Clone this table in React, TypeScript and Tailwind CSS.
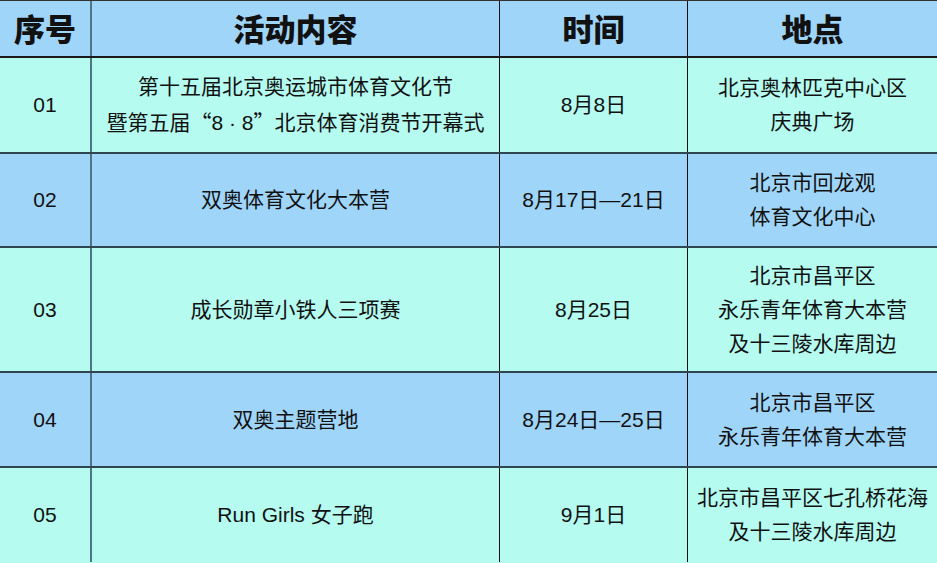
import React from 'react';

interface Row {
  no: string;
  event: React.ReactNode[];
  time: string;
  place: string[];
  height: string;
  bg: string;
}

const cjk = { fontFamily: '"Noto Sans CJK SC", sans-serif' };

const rows: Row[] = [
  {
    no: '01',
    event: [
      '第十五届北京奥运城市体育文化节',
      <>
        暨第五届<span style={cjk}>“</span>8 · 8<span style={cjk}>”</span>北京体育消费节开幕式
      </>,
    ],
    time: '8月8日',
    place: ['北京奥林匹克中心区', '庆典广场'],
    height: 'h-[96px]',
    bg: 'bg-[#b5fbf0]',
  },
  {
    no: '02',
    event: ['双奥体育文化大本营'],
    time: '8月17日—21日',
    place: ['北京市回龙观', '体育文化中心'],
    height: 'h-[94px]',
    bg: 'bg-[#a0d5fa]',
  },
  {
    no: '03',
    event: ['成长勋章小铁人三项赛'],
    time: '8月25日',
    place: ['北京市昌平区', '永乐青年体育大本营', '及十三陵水库周边'],
    height: 'h-[125px]',
    bg: 'bg-[#b5fbf0]',
  },
  {
    no: '04',
    event: ['双奥主题营地'],
    time: '8月24日—25日',
    place: ['北京市昌平区', '永乐青年体育大本营'],
    height: 'h-[95px]',
    bg: 'bg-[#a0d5fa]',
  },
  {
    no: '05',
    event: ['Run Girls 女子跑'],
    time: '9月1日',
    place: ['北京市昌平区七孔桥花海', '及十三陵水库周边'],
    height: 'h-[94px]',
    bg: 'bg-[#b5fbf0]',
  },
];

const font = { fontFamily: '"Liberation Sans", "Noto Sans CJK SC", sans-serif' };

const Lines: React.FC<{ lines: React.ReactNode[] }> = ({ lines }) => (
  <div className="flex flex-col items-center leading-[34px]">
    {lines.map((l, i) => (
      <span key={i} className="whitespace-nowrap">
        {l}
      </span>
    ))}
  </div>
);

const App: React.FC = () => {
  return (
    <div className="w-[937px] h-[563px] overflow-hidden bg-[#b5fbf0] text-[#111]" style={font}>
      <div className="grid grid-cols-[92px_408px_188px_249px] h-[58px] bg-[#a0d5fa] border-t border-[#333] border-b-2 border-b-[#1a1a1a] text-[31px] font-black">
        <div className="flex items-center justify-center pt-[5px] border-r-2 border-[#4f7482]">序号</div>
        <div className="flex items-center justify-center pt-[5px] border-r border-[#111]">活动内容</div>
        <div className="flex items-center justify-center pt-[5px] border-r border-[#111]">时间</div>
        <div className="flex items-center justify-center pt-[5px]">地点</div>
      </div>
      {rows.map((r, i) => (
        <div
          key={r.no}
          className={`grid grid-cols-[92px_408px_188px_249px] ${r.height} ${r.bg} text-[21px] ${
            i < rows.length - 1 ? 'border-b-2 border-[#2f4650]' : ''
          }`}
        >
          <div className="flex items-center justify-center border-r-2 border-[#4f7482]">{r.no}</div>
          <div className="flex items-center justify-center border-r border-[#111]">
            <Lines lines={r.event} />
          </div>
          <div className="flex items-center justify-center border-r border-[#111]">{r.time}</div>
          <div className="flex items-center justify-center">
            <Lines lines={r.place} />
          </div>
        </div>
      ))}
    </div>
  );
};

export default App;
